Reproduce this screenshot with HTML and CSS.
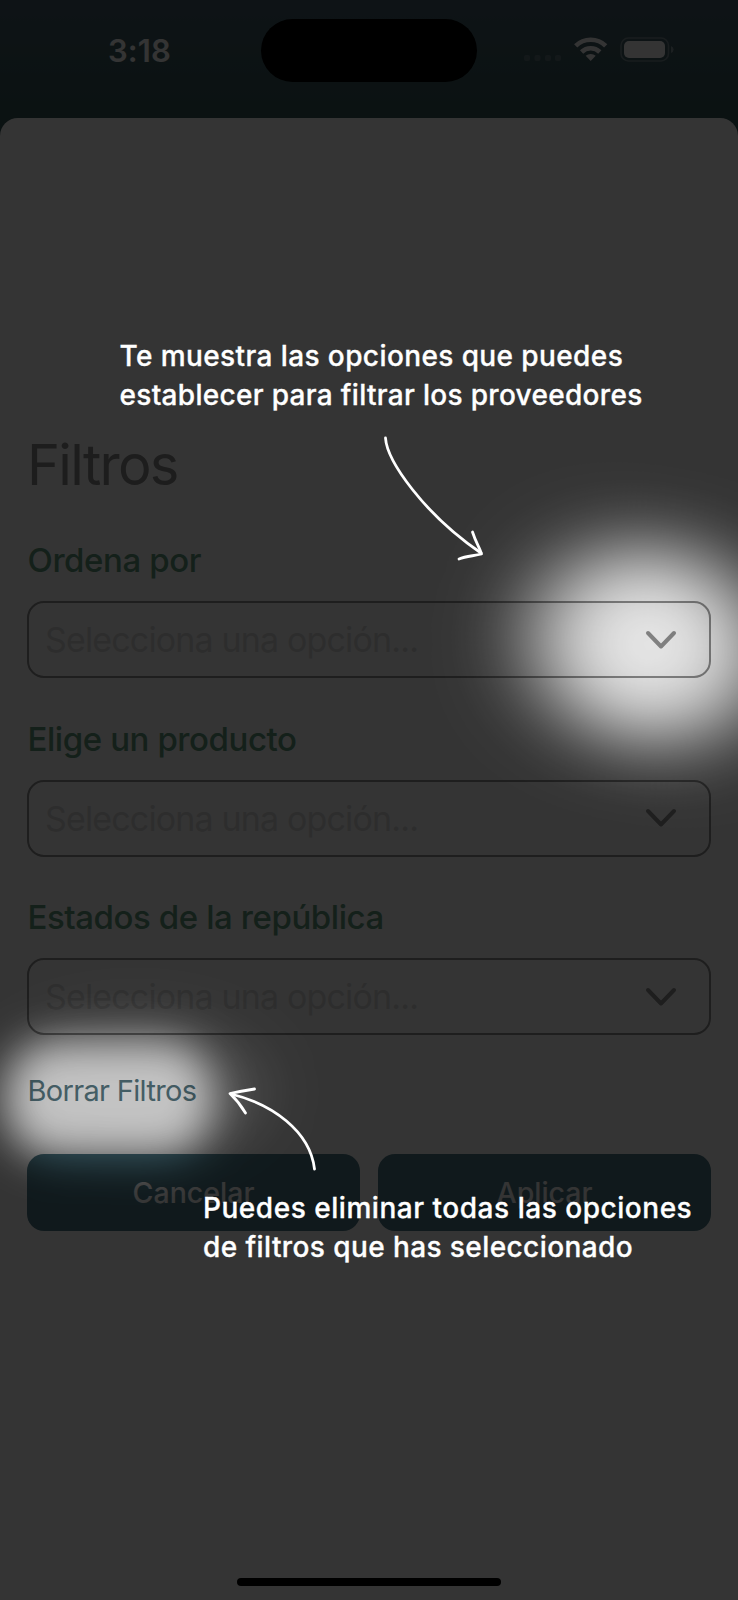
FILE: index.html
```html
<!DOCTYPE html>
<html lang="es">
<head>
<meta charset="utf-8">
<title>Filtros</title>
<link rel="stylesheet" href="styles.css">
</head>
<body>
<div class="screen">
  <header class="status">
    <span class="time">3:18</span>
    <span class="island"></span>
    <svg class="indicators" width="152" height="28" viewBox="0 0 152 28">
      <g fill="#fff" opacity=".17"><rect x="0" y="19" width="6" height="6" rx="2"/><rect x="10.5" y="19" width="6" height="6" rx="2"/><rect x="21" y="19" width="6" height="6" rx="2"/><rect x="31" y="19" width="6" height="6" rx="2"/></g>
      <g fill="none" stroke="#fff" stroke-width="4.6"><path d="M51.700 9.800a21.500 21.500 0 0 1 30 0"/><path d="M57.600 16a13 13 0 0 1 18.200 0"/></g>
      <path d="M66.700 25l-5-5.200a7.500 7.500 0 0 1 10 0z" fill="#fff"/>
      <rect x="97" y="2" width="47.5" height="23" rx="7.5" fill="none" stroke="#fff" stroke-width="1.6" opacity=".3"/>
      <rect x="100" y="5" width="41" height="17" rx="5" fill="#fff"/>
      <path d="M147 10q2.600 1 2.600 3.500t-2.600 3.500z" fill="#fff" opacity=".4"/>
    </svg>
  </header>
  <main class="sheet">
    <h1 class="title">Filtros</h1>
    <section class="group">
      <label class="label">Ordena por</label>
      <div class="field"><span class="hint">Selecciona una opción...</span><svg class="chev" width="32" height="20" viewBox="0 0 32 20"><path d="M3 3l13 13.500L29 3"/></svg></div>
    </section>
    <section class="group">
      <label class="label">Elige un producto</label>
      <div class="field"><span class="hint">Selecciona una opción...</span><svg class="chev" width="32" height="20" viewBox="0 0 32 20"><path d="M3 3l13 13.500L29 3"/></svg></div>
    </section>
    <section class="group">
      <label class="label">Estados de la república</label>
      <div class="field"><span class="hint">Selecciona una opción...</span><svg class="chev" width="32" height="20" viewBox="0 0 32 20"><path d="M3 3l13 13.500L29 3"/></svg></div>
    </section>
    <a class="clear">Borrar Filtros</a>
    <div class="actions"><button class="btn">Cancelar</button><button class="btn">Aplicar</button></div>
    <div class="home"></div>
  </main>
  <svg class="scrim" width="738" height="1600" viewBox="0 0 738 1600">
    <defs>
      <filter id="b1" filterUnits="userSpaceOnUse" x="250" y="300" width="850" height="700"><feGaussianBlur stdDeviation="45 36"/></filter>
      <filter id="b2" filterUnits="userSpaceOnUse" x="-200" y="850" width="700" height="500"><feGaussianBlur stdDeviation="21"/></filter>
      <filter id="b3" filterUnits="userSpaceOnUse" x="-200" y="850" width="700" height="500"><feGaussianBlur stdDeviation="30"/></filter>
      <mask id="m" maskUnits="userSpaceOnUse" x="0" y="0" width="738" height="1600">
        <rect width="738" height="1600" fill="#fff"/>
        <ellipse cx="649" cy="645" rx="115" ry="97" fill="#000" fill-opacity=".87" filter="url(#b1)" transform="rotate(10 649 645)"/>
        <rect x="6" y="1042" width="206" height="114" rx="50" fill="#000" fill-opacity=".66" filter="url(#b2)"/>
        <ellipse cx="135" cy="1092" rx="130" ry="66" fill="#000" fill-opacity=".14" filter="url(#b3)"/>
      </mask>
    </defs>
    <rect width="738" height="1600" fill="#000" fill-opacity=".796" mask="url(#m)"/>
  </svg>
  <svg class="arrows" width="738" height="1600" viewBox="0 0 738 1600">
    <path d="M385.500 438C387 461 424 514 481 553"/>
    <path d="M472.500 532C476 543 480 548 481.500 554C474 556 466 556 459 559"/>
    <path d="M314.500 1169C310 1131 272 1104 231 1094"/>
    <path d="M254.500 1089Q242 1091 230 1093.500Q239 1102 245.500 1113"/>
  </svg>
  <p class="tip tip-top"><span class="opens">Te muestra las opciones que puedes</span><br><span class="closes">establecer para filtrar los proveedores</span></p>
  <p class="tip tip-bottom"><span class="opens">Puedes eliminar todas las opciones</span><br><span class="closes">de filtros que has seleccionado</span></p>
</div>
</body>
</html>
```
FILE: styles.css
```css
* { box-sizing: border-box; }
body { margin: 0; font-family: Inter, "Liberation Sans", sans-serif; }
.screen { position: relative; width: 738px; height: 1600px; overflow: hidden; display: flex; flex-direction: column; background: linear-gradient(#46606e 0, #365858 118px, #365858 160px); }
.status { height: 118px; flex: none; display: grid; grid-template-columns: 261px 216px 261px; align-items: start; color: #fff; }
.time { padding: 32px 0 0 108px; font-size: 31px; line-height: 38px; font-weight: 600; letter-spacing: .1px; }
.island { margin-top: 19px; height: 63px; border-radius: 32px; background: #000; }
.indicators { margin: 36px 0 0 47px; }
.sheet { flex: 1; display: flex; flex-direction: column; background: #fff; border-radius: 18px 18px 0 0; padding: 313px 27px 14px; }
.title { margin: 0 0 33px; font-size: 56px; line-height: 68px; font-weight: 400; color: #8f8f8f; letter-spacing: -1.7px; }
.group { height: 178.500px; flex: none; display: flex; flex-direction: column; }
.label { height: 69px; padding-left: .5px; line-height: 56px; font-size: 33px; font-weight: 500; color: #629d80; letter-spacing: -.42px; white-space: nowrap; }
.field { height: 77px; border: 2px solid #919191; border-radius: 17px; display: flex; align-items: center; justify-content: space-between; padding: 0 32px 0 16px; }
.hint { font-size: 34px; color: #dcdcdc; letter-spacing: -.85px; white-space: nowrap; }
.chev { fill: none; stroke: #919191; stroke-width: 4; stroke-linecap: round; stroke-linejoin: round; }
.clear { height: 86px; padding: 6px 0 0 .5px; font-size: 29px; line-height: 34px; color: #5a7b85; letter-spacing: -.67px; }
.actions { display: grid; grid-template-columns: 1fr 1fr; gap: 18px; }
.btn { height: 77px; border: 0; padding: 0; border-radius: 17px; background: #4e7b89; color: #fff; font: 500 28.500px Inter, sans-serif; letter-spacing: 0; }
.home { width: 264px; height: 8px; border-radius: 4px; background: #000; margin: auto auto 0; }
.scrim, .arrows { position: absolute; left: 0; top: 0; }
.arrows { fill: none; stroke: #fff; stroke-width: 2.8; stroke-linecap: round; stroke-linejoin: round; }
.tip { position: absolute; margin: 0; color: #fff; font-size: 28px; line-height: 39px; font-weight: 500; -webkit-text-stroke: .3px #fff; white-space: nowrap; }
.tip-top { left: 119.500px; top: 337px; }
.tip-bottom { left: 203px; top: 1189px; }
.tip-top .opens { letter-spacing: .4px; }
.tip-top .closes { letter-spacing: .31px; }
.tip-bottom .opens { letter-spacing: .53px; }
.tip-bottom .closes { letter-spacing: .41px; }
```
